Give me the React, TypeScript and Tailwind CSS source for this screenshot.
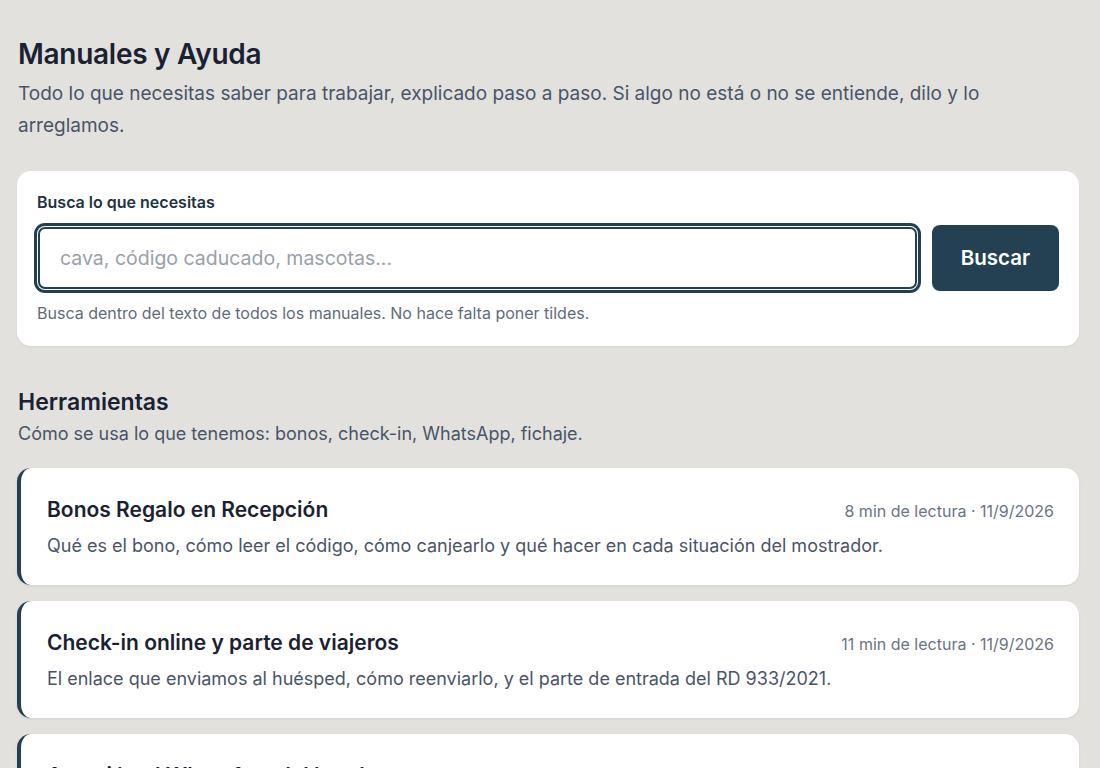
const manuals = [
  {
    title: "Bonos Regalo en Recepción",
    meta: "8 min de lectura · 11/9/2026",
    desc: "Qué es el bono, cómo leer el código, cómo canjearlo y qué hacer en cada situación del mostrador.",
  },
  {
    title: "Check-in online y parte de viajeros",
    meta: "11 min de lectura · 11/9/2026",
    desc: "El enlace que enviamos al huésped, cómo reenviarlo, y el parte de entrada del RD 933/2021.",
  },
  {
    title: "Atención al WhatsApp del hotel",
    meta: "6 min de lectura · 11/9/2026",
    desc: "Cómo responder a los huéspedes por WhatsApp, plantillas y horarios de atención.",
  },
];

export default function App() {
  return (
    <div className="min-h-screen bg-[#e2e1de] pl-[17px] pr-[21px] pt-[36px] pb-10 font-['Inter',sans-serif] text-[#1c2433]">
      {/* Header */}
      <h1 className="pl-[1px] text-[28px] font-semibold leading-[36px] tracking-[-0.01em] text-[#1a2232]">
        Manuales y Ayuda
      </h1>
      <p className="mt-[6px] pl-[1px] text-[19px] leading-[32px] text-[#4a5468]">
        Todo lo que necesitas saber para trabajar, explicado paso a paso. Si algo no está o no se entiende, dilo y lo arreglamos.
      </p>

      {/* Search */}
      <div className="mt-[29px] rounded-[14px] bg-white px-5 pt-[21px] pb-[23px] shadow-[0_1px_2px_rgba(0,0,0,0.06)]">
        <label className="block text-[16px] font-semibold leading-5 text-[#1f3342]">
          Busca lo que necesitas
        </label>
        <div className="mt-[13px] flex items-center gap-[15px]">
          <input
            type="text"
            placeholder="cava, código caducado, mascotas..."
            className="ml-[1px] h-[62px] flex-1 rounded-[7px] border-2 border-[#22404f] bg-white px-5 text-[19.5px] text-[#1c2433] outline-none ring-[3px] ring-[#22404f] ring-offset-[1px] placeholder:text-[#9aa0aa]"
          />
          <button className="h-[66px] w-[127px] rounded-[8px] bg-[#234152] text-[20.5px] font-semibold text-white">
            Buscar
          </button>
        </div>
        <p className="mt-[12px] text-[16px] leading-5 text-[#5f6b7d]">
          Busca dentro del texto de todos los manuales. No hace falta poner tildes.
        </p>
      </div>

      {/* Section */}
      <h2 className="mt-[42px] pl-[1px] text-[23px] font-semibold leading-7 text-[#1a2232]">Herramientas</h2>
      <p className="mt-[4px] pl-[1px] text-[18px] leading-7 text-[#4a5468]">
        Cómo se usa lo que tenemos: bonos, check-in, WhatsApp, fichaje.
      </p>

      <div className="mt-[20px] flex flex-col gap-4">
        {manuals.map((m) => (
          <div
            key={m.title}
            className="rounded-[14px] border-l-4 border-[#234152] bg-white pl-[26px] pr-[25px] pt-[28px] pb-[25px] shadow-[0_1px_3px_rgba(0,0,0,0.07)]"
          >
            <div className="flex items-baseline justify-between gap-4">
              <h3 className="text-[21px] font-semibold leading-7 text-[#1a2232]">{m.title}</h3>
              <span className="shrink-0 text-[16px] text-[#6b7384]">{m.meta}</span>
            </div>
            <p className="mt-[8px] text-[18px] leading-7 text-[#4a5468]">{m.desc}</p>
          </div>
        ))}
      </div>
    </div>
  );
}
